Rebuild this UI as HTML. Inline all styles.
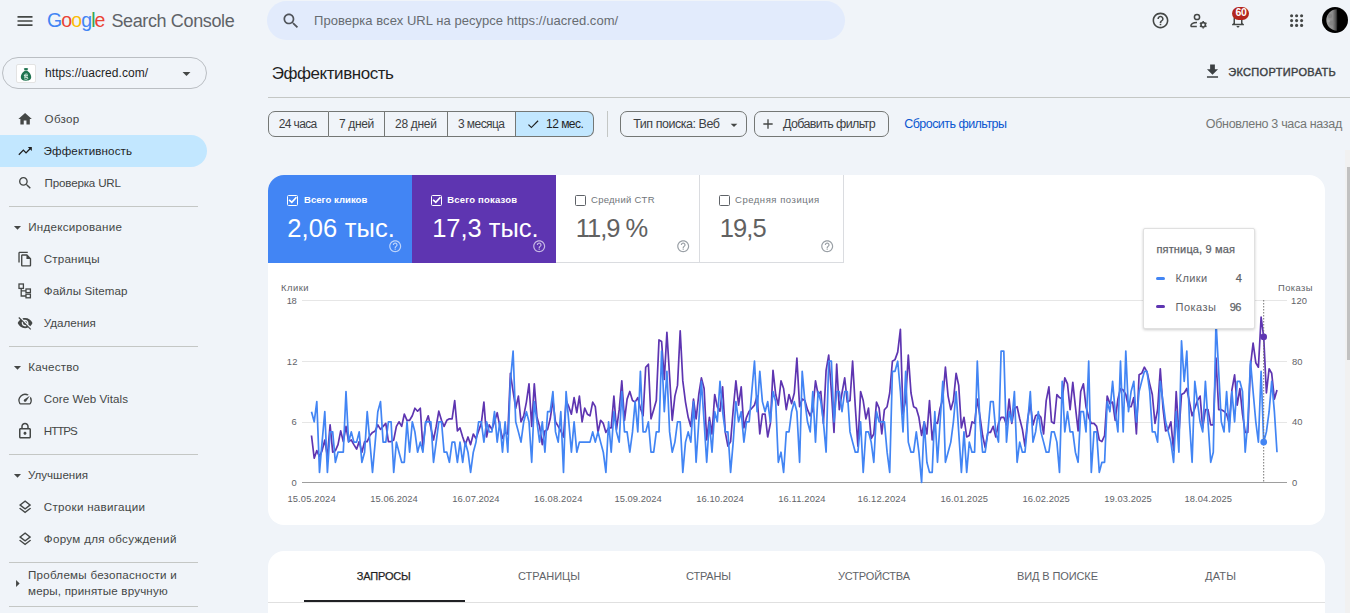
<!DOCTYPE html>
<html lang="ru">
<head>
<meta charset="utf-8">
<title>Эффективность</title>
<style>
*{box-sizing:border-box;margin:0;padding:0}
html,body{width:1350px;height:613px;overflow:hidden}
body{background:#f0f4f9;font-family:"Liberation Sans",sans-serif;color:#1f1f1f;position:relative}
.b{position:absolute}
.t{position:absolute;white-space:nowrap;line-height:1}
svg{position:absolute;overflow:visible}
.hr{position:absolute;left:9px;width:189px;height:1px;background:#c4c7c5}
.seg{position:absolute;top:111px;height:26px;border:1px solid #747775;border-left:none}
.chip{position:absolute;top:111px;height:26px;border:1px solid #747775;border-radius:7px}
.card{position:absolute;background:#fff;border-radius:16px}
.cb{position:absolute;width:11px;height:11px;border-radius:1.5px}
</style>
</head>
<body>
<!-- header -->
<div class="b" style="left:267px;top:1px;width:578px;height:39px;border-radius:20px;background:#e2ebfc"></div>
<!-- property selector -->
<div class="b" style="left:2px;top:57px;width:205px;height:32px;border:1px solid #babec3;border-radius:16px"></div>
<div class="b" style="left:16px;top:64px;width:20px;height:19px;background:#fff;border:1px solid #e3e3e3;border-radius:2px"></div>
<!-- nav -->
<div class="b" style="left:0;top:135px;width:207px;height:32px;background:#c2e7ff;border-radius:0 16px 16px 0"></div>
<div class="hr" style="top:206px"></div>
<div class="hr" style="top:346px"></div>
<div class="hr" style="top:454px"></div>
<div class="hr" style="top:562px"></div>
<div class="hr" style="top:606px"></div>
<!-- main -->
<div class="b" style="left:268px;top:97px;width:1082px;height:1px;background:#c4c7c5"></div>
<div class="seg" style="left:268px;width:61px;border-left:1px solid #747775;border-radius:7px 0 0 7px"></div>
<div class="seg" style="left:329px;width:56px"></div>
<div class="seg" style="left:385px;width:63px"></div>
<div class="seg" style="left:448px;width:68px"></div>
<div class="seg" style="left:516px;width:78px;border-radius:0 7px 7px 0;background:#c2e7ff"></div>
<div class="b" style="left:607px;top:111px;width:1px;height:26px;background:#c4c7c5"></div>
<div class="chip" style="left:620px;width:127px"></div>
<div class="chip" style="left:754px;width:135px"></div>
<!-- card 1 -->
<div class="card" style="left:268px;top:175px;width:1057px;height:349.5px"></div>
<div class="b" style="left:268px;top:175px;width:144px;height:88px;background:#4285f4;border-radius:16px 0 0 0"></div>
<div class="b" style="left:412px;top:175px;width:144px;height:88px;background:#5e35b1"></div>
<div class="b" style="left:556px;top:175px;width:144px;height:88px;border-right:1px solid #dadce0;border-bottom:1px solid #dadce0"></div>
<div class="b" style="left:700px;top:175px;width:144px;height:88px;border-right:1px solid #dadce0;border-bottom:1px solid #dadce0"></div>
<div class="cb" style="left:287px;top:195px;border:1.3px solid #fff"></div>
<div class="cb" style="left:431px;top:195px;border:1.3px solid #fff"></div>
<div class="cb" style="left:575px;top:195px;border:1.3px solid #5f6368"></div>
<div class="cb" style="left:719px;top:195px;border:1.3px solid #5f6368"></div>

<svg style="left:0;top:0" width="1350" height="613" viewBox="0 0 1350 613">
<g stroke="#e6e6e6" stroke-width="1" shape-rendering="crispEdges">
<line x1="302" x2="1287" y1="300.5" y2="300.5"/><line x1="302" x2="1287" y1="361.5" y2="361.5"/><line x1="302" x2="1287" y1="422.5" y2="422.5"/>
</g>
<line x1="302" x2="1287" y1="482.5" y2="482.5" stroke="#9e9e9e" stroke-width="1" shape-rendering="crispEdges"/>
<polyline fill="none" stroke="#5e35b1" stroke-width="1.7" stroke-linejoin="round" points="311.5,435.5 314.2,458.2 316.8,450.6 319.5,456.7 322.1,450.6 324.8,440.0 327.4,456.7 330.1,424.9 332.7,452.2 335.4,450.6 338.0,444.6 340.7,430.9 343.3,441.6 346.0,426.4 348.6,441.6 351.3,440.0 353.9,444.6 356.6,449.1 359.2,441.6 361.9,452.2 364.6,441.6 367.2,441.6 369.9,435.5 372.5,432.4 375.2,430.9 377.8,424.9 380.5,429.4 383.1,426.4 385.8,423.4 388.4,441.6 391.1,441.6 393.7,440.0 396.4,426.4 399.0,421.8 401.7,426.4 404.3,414.2 407.0,420.3 409.6,420.3 412.3,415.8 414.9,408.2 417.6,411.2 420.3,408.2 422.9,447.6 425.6,423.4 428.2,415.8 430.9,427.9 433.5,440.0 436.2,426.4 438.8,411.2 441.5,420.3 444.1,426.4 446.8,420.3 449.4,418.8 452.1,418.8 454.7,400.6 457.4,430.9 460.0,427.9 462.7,437.0 465.3,444.6 468.0,437.0 470.6,444.6 473.3,434.0 476.0,438.5 478.6,430.9 481.3,423.4 483.9,402.1 486.6,437.0 489.2,424.9 491.9,429.4 494.5,421.8 497.2,412.7 499.8,426.4 502.5,438.5 505.1,432.4 507.8,434.0 510.4,373.3 513.1,391.5 515.7,408.2 518.4,396.1 521.0,421.8 523.7,415.8 526.4,402.1 529.0,383.9 531.7,426.4 534.3,383.9 537.0,417.3 539.6,426.4 542.3,444.6 544.9,430.9 547.6,429.4 550.2,418.8 552.9,400.6 555.5,421.8 558.2,426.4 560.8,430.9 563.5,437.0 566.1,400.6 568.8,406.7 571.4,414.2 574.1,397.6 576.8,412.7 579.4,396.1 582.1,421.8 584.7,408.2 587.4,414.2 590.0,415.8 592.7,402.1 595.3,406.7 598.0,432.4 600.6,420.3 603.3,423.4 605.9,432.4 608.6,427.9 611.2,427.9 613.9,396.1 616.5,429.4 619.2,409.7 621.8,380.9 624.5,420.3 627.1,399.1 629.8,391.5 632.5,400.6 635.1,402.1 637.8,397.6 640.4,408.2 643.1,415.8 645.7,367.2 648.4,364.2 651.0,418.8 653.7,409.7 656.3,400.6 659.0,339.9 661.6,341.5 664.3,379.4 666.9,332.4 669.6,376.3 672.2,420.3 674.9,396.1 677.5,385.4 680.2,330.8 682.8,380.9 685.5,402.1 688.2,417.3 690.8,426.4 693.5,399.1 696.1,418.8 698.8,394.5 701.4,377.9 704.1,388.5 706.7,440.0 709.4,417.3 712.0,434.0 714.7,394.5 717.3,406.7 720.0,411.2 722.6,386.9 725.3,432.4 727.9,446.1 730.6,441.6 733.2,409.7 735.9,380.9 738.6,405.1 741.2,386.9 743.9,427.9 746.5,417.3 749.2,411.2 751.8,408.2 754.5,405.1 757.1,396.1 759.8,434.0 762.4,414.2 765.1,414.2 767.7,437.0 770.4,423.4 773.0,370.3 775.7,394.5 778.3,405.1 781.0,380.9 783.6,388.5 786.3,409.7 789.0,394.5 791.6,403.6 794.3,393.0 796.9,358.1 799.6,406.7 802.2,399.1 804.9,400.6 807.5,409.7 810.2,415.8 812.8,409.7 815.5,380.9 818.1,394.5 820.8,391.5 823.4,423.4 826.1,370.3 828.7,355.1 831.4,391.5 834.0,432.4 836.7,364.2 839.3,409.7 842.0,393.0 844.7,377.9 847.3,402.1 850.0,400.6 852.6,361.2 855.3,406.7 857.9,446.1 860.6,391.5 863.2,400.6 865.9,418.8 868.5,408.2 871.2,438.5 873.8,434.0 876.5,402.1 879.1,408.2 881.8,434.0 884.4,409.7 887.1,406.7 889.7,393.0 892.4,361.2 895.0,359.6 897.7,352.1 900.4,329.3 903.0,414.2 905.7,399.1 908.3,355.1 911.0,393.0 913.6,406.7 916.3,408.2 918.9,417.3 921.6,435.5 924.2,421.8 926.9,434.0 929.5,400.6 932.2,440.0 934.8,421.8 937.5,423.4 940.1,408.2 942.8,399.1 945.4,367.2 948.1,396.1 950.8,409.7 953.4,400.6 956.1,373.3 958.7,385.4 961.4,427.9 964.0,417.3 966.7,437.0 969.3,435.5 972.0,421.8 974.6,423.4 977.3,399.1 979.9,415.8 982.6,435.5 985.2,447.6 987.9,432.4 990.5,432.4 993.2,426.4 995.8,437.0 998.5,423.4 1001.1,417.3 1003.8,417.3 1006.5,424.9 1009.1,399.1 1011.8,423.4 1014.4,408.2 1017.1,406.7 1019.7,418.8 1022.4,429.4 1025.0,446.1 1027.7,418.8 1030.3,403.6 1033.0,424.9 1035.6,415.8 1038.3,414.2 1040.9,417.3 1043.6,434.0 1046.2,400.6 1048.9,386.9 1051.5,421.8 1054.2,423.4 1056.9,394.5 1059.5,397.6 1062.2,399.1 1064.8,377.9 1067.5,383.9 1070.1,409.7 1072.8,382.4 1075.4,406.7 1078.1,430.9 1080.7,391.5 1083.4,383.9 1086.0,406.7 1088.7,417.3 1091.3,423.4 1094.0,423.4 1096.6,426.4 1099.3,440.0 1101.9,441.6 1104.6,435.5 1107.2,396.1 1109.9,403.6 1112.6,402.1 1115.2,420.3 1117.9,399.1 1120.5,388.5 1123.2,390.0 1125.8,394.5 1128.5,406.7 1131.1,406.7 1133.8,397.6 1136.4,434.0 1139.1,374.8 1141.7,373.3 1144.4,367.2 1147.0,371.8 1149.7,383.9 1152.3,394.5 1155.0,423.4 1157.6,409.7 1160.3,368.8 1163.0,408.2 1165.6,430.9 1168.3,429.4 1170.9,421.8 1173.6,450.6 1176.2,391.5 1178.9,434.0 1181.5,394.5 1184.2,393.0 1186.8,388.5 1189.5,402.1 1192.1,415.8 1194.8,408.2 1197.4,400.6 1200.1,396.1 1202.7,427.9 1205.4,409.7 1208.0,409.7 1210.7,424.9 1213.3,424.9 1216.0,358.1 1218.7,409.7 1221.3,409.7 1224.0,411.2 1226.6,414.2 1229.3,423.4 1231.9,390.0 1234.6,374.8 1237.2,405.1 1239.9,388.5 1242.5,414.2 1245.2,432.4 1247.8,432.4 1250.5,365.7 1253.1,343.0 1255.8,362.7 1258.4,367.2 1261.1,317.2 1263.7,336.9 1266.4,393.0 1269.1,368.8 1271.7,373.3 1274.4,399.1 1277.0,390.0"/>
<polyline fill="none" stroke="#4285f4" stroke-width="1.7" stroke-linejoin="round" points="311.5,411.7 314.2,421.8 316.8,401.6 319.5,472.4 322.1,442.1 324.8,411.7 327.4,472.4 330.1,431.9 332.7,431.9 335.4,462.3 338.0,452.2 340.7,452.2 343.3,452.2 346.0,391.5 348.6,442.1 351.3,431.9 353.9,442.1 356.6,442.1 359.2,431.9 361.9,462.3 364.6,452.2 367.2,411.7 369.9,442.1 372.5,472.4 375.2,442.1 377.8,411.7 380.5,401.6 383.1,442.1 385.8,442.1 388.4,421.8 391.1,421.8 393.7,472.4 396.4,442.1 399.0,452.2 401.7,462.3 404.3,462.3 407.0,421.8 409.6,452.2 412.3,421.8 414.9,431.9 417.6,452.2 420.3,442.1 422.9,452.2 425.6,421.8 428.2,421.8 430.9,421.8 433.5,462.3 436.2,442.1 438.8,421.8 441.5,421.8 444.1,452.2 446.8,452.2 449.4,462.3 452.1,442.1 454.7,442.1 457.4,462.3 460.0,442.1 462.7,462.3 465.3,442.1 468.0,452.2 470.6,472.4 473.3,452.2 476.0,442.1 478.6,421.8 481.3,421.8 483.9,442.1 486.6,421.8 489.2,431.9 491.9,431.9 494.5,411.7 497.2,442.1 499.8,421.8 502.5,452.2 505.1,421.8 507.8,452.2 510.4,381.4 513.1,351.1 515.7,421.8 518.4,431.9 521.0,442.1 523.7,421.8 526.4,411.7 529.0,421.8 531.7,462.3 534.3,401.6 537.0,421.8 539.6,442.1 542.3,421.8 544.9,452.2 547.6,411.7 550.2,411.7 552.9,391.5 555.5,431.9 558.2,442.1 560.8,411.7 563.5,472.4 566.1,391.5 568.8,421.8 571.4,452.2 574.1,421.8 576.8,452.2 579.4,442.1 582.1,442.1 584.7,442.1 587.4,442.1 590.0,442.1 592.7,431.9 595.3,442.1 598.0,431.9 600.6,442.1 603.3,452.2 605.9,472.4 608.6,421.8 611.2,452.2 613.9,411.7 616.5,431.9 619.2,442.1 621.8,391.5 624.5,431.9 627.1,431.9 629.8,452.2 632.5,431.9 635.1,401.6 637.8,431.9 640.4,371.3 643.1,431.9 645.7,431.9 648.4,421.8 651.0,452.2 653.7,452.2 656.3,431.9 659.0,431.9 661.6,351.1 664.3,411.7 666.9,371.3 669.6,431.9 672.2,452.2 674.9,442.1 677.5,421.8 680.2,421.8 682.8,472.4 685.5,442.1 688.2,431.9 690.8,442.1 693.5,401.6 696.1,462.3 698.8,421.8 701.4,381.4 704.1,421.8 706.7,462.3 709.4,421.8 712.0,452.2 714.7,411.7 717.3,421.8 720.0,381.4 722.6,411.7 725.3,431.9 727.9,431.9 730.6,472.4 733.2,442.1 735.9,401.6 738.6,421.8 741.2,411.7 743.9,442.1 746.5,421.8 749.2,421.8 751.8,391.5 754.5,361.2 757.1,411.7 759.8,371.3 762.4,401.6 765.1,411.7 767.7,401.6 770.4,421.8 773.0,391.5 775.7,401.6 778.3,462.3 781.0,452.2 783.6,472.4 786.3,431.9 789.0,431.9 791.6,411.7 794.3,401.6 796.9,411.7 799.6,462.3 802.2,371.3 804.9,401.6 807.5,421.8 810.2,431.9 812.8,391.5 815.5,442.1 818.1,391.5 820.8,401.6 823.4,421.8 826.1,452.2 828.7,361.2 831.4,361.2 834.0,421.8 836.7,391.5 839.3,391.5 842.0,411.7 844.7,391.5 847.3,391.5 850.0,431.9 852.6,442.1 855.3,452.2 857.9,452.2 860.6,421.8 863.2,472.4 865.9,431.9 868.5,431.9 871.2,442.1 873.8,462.3 876.5,411.7 879.1,421.8 881.8,421.8 884.4,421.8 887.1,452.2 889.7,472.4 892.4,371.3 895.0,371.3 897.7,361.2 900.4,391.5 903.0,431.9 905.7,371.3 908.3,442.1 911.0,452.2 913.6,452.2 916.3,431.9 918.9,452.2 921.6,482.5 924.2,421.8 926.9,462.3 929.5,472.4 932.2,472.4 934.8,411.7 937.5,462.3 940.1,421.8 942.8,381.4 945.4,462.3 948.1,452.2 950.8,442.1 953.4,421.8 956.1,391.5 958.7,431.9 961.4,472.4 964.0,431.9 966.7,472.4 969.3,442.1 972.0,452.2 974.6,452.2 977.3,361.2 979.9,421.8 982.6,452.2 985.2,452.2 987.9,431.9 990.5,401.6 993.2,401.6 995.8,431.9 998.5,442.1 1001.1,351.1 1003.8,351.1 1006.5,442.1 1009.1,411.7 1011.8,421.8 1014.4,391.5 1017.1,462.3 1019.7,442.1 1022.4,452.2 1025.0,452.2 1027.7,421.8 1030.3,391.5 1033.0,442.1 1035.6,431.9 1038.3,411.7 1040.9,431.9 1043.6,442.1 1046.2,452.2 1048.9,452.2 1051.5,431.9 1054.2,431.9 1056.9,442.1 1059.5,472.4 1062.2,381.4 1064.8,431.9 1067.5,411.7 1070.1,431.9 1072.8,431.9 1075.4,452.2 1078.1,462.3 1080.7,411.7 1083.4,411.7 1086.0,431.9 1088.7,361.2 1091.3,472.4 1094.0,431.9 1096.6,431.9 1099.3,472.4 1101.9,462.3 1104.6,462.3 1107.2,401.6 1109.9,411.7 1112.6,381.4 1115.2,411.7 1117.9,431.9 1120.5,361.2 1123.2,431.9 1125.8,351.1 1128.5,411.7 1131.1,391.5 1133.8,381.4 1136.4,421.8 1139.1,391.5 1141.7,381.4 1144.4,371.3 1147.0,371.3 1149.7,391.5 1152.3,431.9 1155.0,431.9 1157.6,442.1 1160.3,381.4 1163.0,401.6 1165.6,421.8 1168.3,431.9 1170.9,442.1 1173.6,462.3 1176.2,411.7 1178.9,452.2 1181.5,340.9 1184.2,381.4 1186.8,351.1 1189.5,421.8 1192.1,462.3 1194.8,381.4 1197.4,401.6 1200.1,421.8 1202.7,431.9 1205.4,381.4 1208.0,421.8 1210.7,462.3 1213.3,452.2 1216.0,320.7 1218.7,371.3 1221.3,421.8 1224.0,431.9 1226.6,391.5 1229.3,431.9 1231.9,391.5 1234.6,421.8 1237.2,381.4 1239.9,381.4 1242.5,391.5 1245.2,452.2 1247.8,421.8 1250.5,361.2 1253.1,391.5 1255.8,421.8 1258.4,442.1 1261.1,371.3 1263.7,442.1 1266.4,431.9 1269.1,411.7 1271.7,381.4 1274.4,411.7 1277.0,452.2"/>
<line x1="1263.7" x2="1263.7" y1="300" y2="483" stroke="#757575" stroke-width="1" stroke-dasharray="1.5,1.5"/>
<circle cx="1263.7" cy="336.9" r="3.3" fill="#5e35b1"/>
<circle cx="1263.7" cy="442.1" r="3.4" fill="#4285f4"/>
</svg>
<!-- tooltip -->
<div class="b" style="left:1143px;top:228px;width:112px;height:101px;background:#fff;border:1px solid #e0e0e0;border-radius:2px;box-shadow:0 1px 3px rgba(0,0,0,.2)"></div>
<div class="b" style="left:1156px;top:276.5px;width:9px;height:3px;border-radius:1.5px;background:#4285f4"></div>
<div class="b" style="left:1156px;top:304.5px;width:9px;height:3px;border-radius:1.5px;background:#5e35b1"></div>
<!-- card 2 -->
<div class="card" style="left:268px;top:551px;width:1057px;height:80px"></div>
<div class="b" style="left:268px;top:602px;width:1057px;height:1px;background:#e0e0e0"></div>
<div class="b" style="left:304px;top:600px;width:161px;height:2px;background:#202124"></div>
<!-- scrollbar -->
<div class="b" style="left:1345px;top:150px;width:5px;height:463px;background:#f1f1f1"></div>
<div class="b" style="left:1347px;top:167px;width:3px;height:193px;background:#c1c1c1"></div>
<!-- icons -->
<svg style="left:14.5px;top:11.0px" width="20" height="20" viewBox="0 0 24 24"><path fill="#444746" d="M3 18h18v-2H3v2zm0-5h18v-2H3v2zm0-7v2h18V6H3z"/></svg>
<svg style="left:281.2px;top:11.3px" width="20" height="20" viewBox="0 0 24 24"><path fill="#50545a" d="M15.5 14h-.79l-.28-.27C15.41 12.59 16 11.11 16 9.5 16 5.91 13.09 3 9.5 3S3 5.91 3 9.5 5.91 16 9.5 16c1.61 0 3.09-.59 4.23-1.57l.27.28v.79l5 4.99L20.49 19l-4.99-5zm-6 0C7.01 14 5 11.99 5 9.5S7.01 5 9.5 5 14 7.01 14 9.5 11.99 14 9.5 14z"/></svg>
<svg style="left:1150.5px;top:11.2px" width="19" height="19" viewBox="0 0 24 24"><path fill="#444746" d="M11 18h2v-2h-2v2zm1-16C6.48 2 2 6.48 2 12s4.48 10 10 10 10-4.48 10-10S17.52 2 12 2zm0 18c-4.41 0-8-3.59-8-8s3.59-8 8-8 8 3.59 8 8-3.59 8-8 8zm0-14c-2.21 0-4 1.79-4 4h2c0-1.1.9-2 2-2s2 .9 2 2c0 2-3 1.75-3 5h2c0-2.25 3-2.5 3-5 0-2.21-1.79-4-4-4z"/></svg>
<svg style="left:1289px;top:13px" width="16" height="16" viewBox="0 0 16 16"><g fill="#444746"><circle cx="2.6" cy="2.8" r="1.55"/><circle cx="2.6" cy="7.6" r="1.55"/><circle cx="2.6" cy="12.399999999999999" r="1.55"/><circle cx="7.6" cy="2.8" r="1.55"/><circle cx="7.6" cy="7.6" r="1.55"/><circle cx="7.6" cy="12.399999999999999" r="1.55"/><circle cx="12.6" cy="2.8" r="1.55"/><circle cx="12.6" cy="7.6" r="1.55"/><circle cx="12.6" cy="12.399999999999999" r="1.55"/></g></svg>
<svg style="left:1228.6px;top:10.8px" width="18" height="18" viewBox="0 0 24 24"><path fill="#444746" d="M12 22c1.1 0 2-.9 2-2h-4c0 1.1.9 2 2 2zm6-6v-5c0-3.07-1.63-5.64-4.5-6.32V4c0-.83-.67-1.5-1.5-1.5s-1.5.67-1.5 1.5v.68C7.64 5.36 6 7.92 6 11v5l-2 2v1h16v-1l-2-2zm-2 1H8v-6c0-2.48 1.51-4.5 4-4.5s4 2.02 4 4.5v6z"/></svg>
<svg style="left:1202.5px;top:62.3px" width="19" height="19" viewBox="0 0 24 24"><path fill="#3c4043" d="M19 9h-4V3H9v6H5l7 7 7-7zM5 18v2h14v-2H5z"/></svg>
<svg style="left:177.3px;top:63.8px" width="19" height="19" viewBox="0 0 24 24"><path fill="#444746" d="M7 10l5 5 5-5z"/></svg>
<svg style="left:1189px;top:12px" width="20" height="18" viewBox="0 0 20 18"><circle cx="8" cy="5" r="2.6" fill="none" stroke="#444746" stroke-width="1.5"/><path d="M1.8 14.5c0-2.6 2.8-4 6.2-4" fill="none" stroke="#444746" stroke-width="1.5"/><path d="M1.8 14.5h6" stroke="#444746" stroke-width="1.5"/><circle cx="14.2" cy="12.8" r="2.2" fill="none" stroke="#444746" stroke-width="1.6"/><path d="M14.2 9v1.4M14.2 15.2v1.4M10.9 10.9l1.2.7M16.3 14l1.2.7M10.9 14.7l1.2-.7M16.3 11.6l1.2-.7" stroke="#444746" stroke-width="1.5"/></svg>
<div class="b" style="left:1232px;top:7px;width:17px;height:13px;border-radius:6.5px;background:#b3261e"></div>
<svg style="left:1322px;top:7.2px" width="26" height="26" viewBox="0 0 26 26"><defs><linearGradient id="mg" x1="0" x2="1" y1="0" y2="0"><stop offset="0" stop-color="#a0a0a0"/><stop offset=".55" stop-color="#8a8a8a"/><stop offset=".85" stop-color="#4a4a4a"/><stop offset="1" stop-color="#000"/></linearGradient></defs><circle cx="13" cy="13" r="13" fill="#000"/><path d="M15 2.300A10.700 10.700 0 0 0 15 23.700c.6-3.400.8-7 .8-10.700S15.600 5.700 15 2.300z" fill="url(#mg)"/><circle cx="8" cy="9" r="2.200" fill="#777" opacity=".5"/><circle cx="10" cy="16" r="2.600" fill="#777" opacity=".45"/><circle cx="6.500" cy="14" r="1.400" fill="#bbb" opacity=".4"/></svg>
<svg style="left:19px;top:66.500px" width="14" height="15" viewBox="0 0 14 15"><path d="M4.800 1.600c.8-.9 3.600-.9 4.400 0l-.9 2h-2.600z" fill="#1f7350"/><path d="M5.500 3.900h3c2.300 1.500 3.700 3.800 3.700 6.200 0 2.500-1.500 3.600-5.200 3.600s-5.200-1.100-5.200-3.600c0-2.400 1.400-4.700 3.700-6.200z" fill="#1f7350"/><path d="M5 8.400h4M5 10.200h4M8.600 7.300c-2-.8-3.400.2-3.200 1.500.2 1.700 3.400 1 3.400 2.500 0 1-1.800 1.400-3.600.6" fill="none" stroke="#dff1e7" stroke-width=".9"/></svg>
<svg style="left:16.9px;top:110.8px" width="16.2" height="16.2" viewBox="0 0 24 24"><path fill="#444746" d="M10 20v-6h4v6h5v-8h3L12 3 2 12h3v8z"/></svg>
<svg style="left:16.9px;top:142.9px" width="16.2" height="16.2" viewBox="0 0 24 24"><path fill="#1f1f1f" d="M16 6l2.29 2.29-4.88 4.88-4-4L2 16.59 3.41 18l6-6 4 4 6.3-6.29L22 12V6z"/></svg>
<svg style="left:17.2px;top:174.7px" width="16.2" height="16.2" viewBox="0 0 24 24"><path fill="#444746" d="M15.5 14h-.79l-.28-.27C15.41 12.59 16 11.11 16 9.5 16 5.91 13.09 3 9.5 3S3 5.91 3 9.5 5.91 16 9.5 16c1.61 0 3.09-.59 4.23-1.57l.27.28v.79l5 4.99L20.49 19l-4.99-5zm-6 0C7.01 14 5 11.99 5 9.5S7.01 5 9.5 5 14 7.01 14 9.5 11.99 14 9.5 14z"/></svg>
<svg style="left:16.9px;top:250.9px" width="16.2" height="16.2" viewBox="0 0 24 24"><path fill="#444746" d="M16 1H4c-1.1 0-2 .9-2 2v14h2V3h12V1zm-1 4H8c-1.1 0-1.99.9-1.99 2L6 21c0 1.1.89 2 1.99 2H19c1.1 0 2-.9 2-2V11l-6-6zM8 21V7h6v5h5v9H8z"/></svg>
<svg style="left:18px;top:283px" width="14" height="16" viewBox="0 0 14 16"><g fill="none" stroke="#444746" stroke-width="1.3"><rect x="1" y="1" width="4.400" height="4.400"/><rect x="8" y="6" width="4.400" height="3.600"/><rect x="8" y="11.200" width="4.400" height="3.600"/><path d="M3.200 5.400v7.600h4.800M3.200 7.800h4.800"/></g></svg>
<svg style="left:16.9px;top:314.9px" width="16.2" height="16.2" viewBox="0 0 24 24"><path fill="#444746" d="M12 7c2.76 0 5 2.24 5 5 0 .65-.13 1.26-.36 1.83l2.92 2.92c1.51-1.26 2.7-2.89 3.43-4.75-1.73-4.39-6-7.5-11-7.5-1.4 0-2.74.25-3.98.7l2.16 2.16C10.74 7.13 11.35 7 12 7zM2 4.27l2.28 2.28.46.46C3.08 8.3 1.78 10.02 1 12c1.73 4.39 6 7.5 11 7.5 1.55 0 3.03-.3 4.38-.84l.42.42L19.73 22 21 20.73 3.27 3 2 4.27zM7.53 9.8l1.55 1.55c-.05.21-.08.43-.08.65 0 1.66 1.34 3 3 3 .22 0 .44-.03.65-.08l1.55 1.55c-.67.33-1.41.53-2.2.53-2.76 0-5-2.24-5-5 0-.79.2-1.53.53-2.2zm4.31-.78l3.15 3.15.02-.16c0-1.66-1.34-3-3-3l-.17.01z"/></svg>
<svg style="left:16.8px;top:390.7px" width="16.2" height="16.2" viewBox="0 0 24 24"><path fill="#444746" d="M20.38 8.57l-1.23 1.85a8 8 0 0 1-.22 7.58H5.07A8 8 0 0 1 15.58 6.85l1.85-1.23A10 10 0 0 0 3.35 19a2 2 0 0 0 1.72 1h13.85a2 2 0 0 0 1.74-1 10 10 0 0 0-.27-10.44zm-9.79 6.84a2 2 0 0 0 2.83 0l5.66-8.49-8.49 5.66a2 2 0 0 0 0 2.83z"/></svg>
<svg style="left:15.9px;top:422.4px" width="18" height="18" viewBox="0 0 24 24"><path fill="#444746" d="M18 8h-1V6c0-2.76-2.24-5-5-5S7 3.24 7 6v2H6c-1.1 0-2 .9-2 2v10c0 1.1.9 2 2 2h12c1.1 0 2-.9 2-2V10c0-1.1-.9-2-2-2zM9 6c0-1.66 1.34-3 3-3s3 1.34 3 3v2H9V6zm9 14H6V10h12v10zm-6-3c1.1 0 2-.9 2-2s-.9-2-2-2-2 .9-2 2 .9 2 2 2z"/></svg>
<svg style="left:16.9px;top:498.9px" width="16.2" height="16.2" viewBox="0 0 24 24"><path fill="#444746" d="M11.99 18.54l-7.37-5.73L3 14.07l9 7 9-7-1.63-1.27-7.38 5.74zM12 16l7.36-5.73L21 9l-9-7-9 7 1.63 1.27L12 16zm0-11.47L17.74 9 12 13.47 6.26 9 12 4.53z"/></svg>
<svg style="left:16.9px;top:530.9px" width="16.2" height="16.2" viewBox="0 0 24 24"><path fill="#444746" d="M11.99 18.54l-7.37-5.73L3 14.07l9 7 9-7-1.63-1.27-7.38 5.74zM12 16l7.36-5.73L21 9l-9-7-9 7 1.63 1.27L12 16zm0-11.47L17.74 9 12 13.47 6.26 9 12 4.53z"/></svg>
<svg style="left:8.5px;top:218.8px" width="17" height="17" viewBox="0 0 24 24"><path fill="#444746" d="M7 10l5 5 5-5z"/></svg>
<svg style="left:8.5px;top:358.8px" width="17" height="17" viewBox="0 0 24 24"><path fill="#444746" d="M7 10l5 5 5-5z"/></svg>
<svg style="left:8.5px;top:466.8px" width="17" height="17" viewBox="0 0 24 24"><path fill="#444746" d="M7 10l5 5 5-5z"/></svg>
<svg style="left:8.5px;top:574.8px" width="17" height="17" viewBox="0 0 24 24"><path fill="#444746" d="M10 17l5-5-5-5z"/></svg>
<svg style="left:525.6px;top:117.2px" width="14.3" height="14.3" viewBox="0 0 24 24"><path fill="#1f1f1f" d="M9 16.17L4.83 12l-1.42 1.41L9 19 21 7l-1.41-1.41z"/></svg>
<svg style="left:725.8px;top:116.5px" width="16" height="16" viewBox="0 0 24 24"><path fill="#444746" d="M7 10l5 5 5-5z"/></svg>
<svg style="left:760.0px;top:115.7px" width="16" height="16" viewBox="0 0 24 24"><path fill="#444746" d="M19 13h-6v6h-2v-6H5v-2h6V5h2v6h6v2z"/></svg>
<svg style="left:287px;top:195px" width="11" height="11" viewBox="0 0 11 11"><path d="M2.1 4.900l2.700 2.400L9.400 2.200" stroke="#fff" stroke-width="1.700" fill="none"/></svg>
<svg style="left:431px;top:195px" width="11" height="11" viewBox="0 0 11 11"><path d="M2.1 4.900l2.700 2.400L9.400 2.200" stroke="#fff" stroke-width="1.700" fill="none"/></svg>
<svg style="left:387.8px;top:239.2px" width="14.4" height="14.4" viewBox="0 0 24 24"><path fill="rgba(255,255,255,.65)" d="M11 18h2v-2h-2v2zm1-16C6.48 2 2 6.48 2 12s4.48 10 10 10 10-4.48 10-10S17.52 2 12 2zm0 18c-4.41 0-8-3.59-8-8s3.59-8 8-8 8 3.59 8 8-3.59 8-8 8zm0-14c-2.21 0-4 1.79-4 4h2c0-1.1.9-2 2-2s2 .9 2 2c0 2-3 1.75-3 5h2c0-2.25 3-2.5 3-5 0-2.21-1.79-4-4-4z"/></svg>
<svg style="left:531.8px;top:239.2px" width="14.4" height="14.4" viewBox="0 0 24 24"><path fill="rgba(255,255,255,.65)" d="M11 18h2v-2h-2v2zm1-16C6.48 2 2 6.48 2 12s4.48 10 10 10 10-4.48 10-10S17.52 2 12 2zm0 18c-4.41 0-8-3.59-8-8s3.59-8 8-8 8 3.59 8 8-3.59 8-8 8zm0-14c-2.21 0-4 1.79-4 4h2c0-1.1.9-2 2-2s2 .9 2 2c0 2-3 1.75-3 5h2c0-2.25 3-2.5 3-5 0-2.21-1.79-4-4-4z"/></svg>
<svg style="left:675.8px;top:239.2px" width="14.4" height="14.4" viewBox="0 0 24 24"><path fill="#9aa0a6" d="M11 18h2v-2h-2v2zm1-16C6.48 2 2 6.48 2 12s4.48 10 10 10 10-4.48 10-10S17.52 2 12 2zm0 18c-4.41 0-8-3.59-8-8s3.59-8 8-8 8 3.59 8 8-3.59 8-8 8zm0-14c-2.21 0-4 1.79-4 4h2c0-1.1.9-2 2-2s2 .9 2 2c0 2-3 1.75-3 5h2c0-2.25 3-2.5 3-5 0-2.21-1.79-4-4-4z"/></svg>
<svg style="left:819.8px;top:239.2px" width="14.4" height="14.4" viewBox="0 0 24 24"><path fill="#9aa0a6" d="M11 18h2v-2h-2v2zm1-16C6.48 2 2 6.48 2 12s4.48 10 10 10 10-4.48 10-10S17.52 2 12 2zm0 18c-4.41 0-8-3.59-8-8s3.59-8 8-8 8 3.59 8 8-3.59 8-8 8zm0-14c-2.21 0-4 1.79-4 4h2c0-1.1.9-2 2-2s2 .9 2 2c0 2-3 1.75-3 5h2c0-2.25 3-2.5 3-5 0-2.21-1.79-4-4-4z"/></svg>

<!-- TEXT -->
<div class="t" style="left:47.0px;top:11.01px;font-size:19.5px;letter-spacing:-0.907px;color:#4285f4"><span style="color:#4285f4">G</span><span style="color:#ea4335">o</span><span style="color:#fbbc04">o</span><span style="color:#4285f4">g</span><span style="color:#34a853">l</span><span style="color:#ea4335">e</span></div>
<div class="t" style="left:111.4px;top:12.00px;font-size:18px;letter-spacing:-0.366px;color:#5f6368">Search Console</div>
<div class="t" style="left:314.0px;top:14.01px;font-size:13px;letter-spacing:0.052px;color:#676c71">Проверка всех URL на ресурсе https://uacred.com/</div>
<div class="t" style="left:45.0px;top:67.01px;font-size:12px;letter-spacing:0.062px;color:#1f1f1f">https://uacred.com/</div>
<div class="t" style="left:44.6px;top:113.00px;font-size:11.6px;letter-spacing:0.282px;color:#444746">Обзор</div>
<div class="t" style="left:43.6px;top:145.00px;font-size:11.6px;letter-spacing:0.122px;color:#1f1f1f">Эффективность</div>
<div class="t" style="left:44.6px;top:177.00px;font-size:11.6px;letter-spacing:-0.175px;color:#444746">Проверка URL</div>
<div class="t" style="left:28.2px;top:221.00px;font-size:11.6px;letter-spacing:0.282px;color:#444746">Индексирование</div>
<div class="t" style="left:43.8px;top:253.00px;font-size:11.6px;letter-spacing:0.186px;color:#444746">Страницы</div>
<div class="t" style="left:43.8px;top:285.00px;font-size:11.6px;letter-spacing:0.096px;color:#444746">Файлы Sitemap</div>
<div class="t" style="left:43.8px;top:317.00px;font-size:11.6px;letter-spacing:-0.007px;color:#444746">Удаления</div>
<div class="t" style="left:28.2px;top:361.00px;font-size:11.6px;letter-spacing:0.251px;color:#444746">Качество</div>
<div class="t" style="left:43.8px;top:393.00px;font-size:11.6px;letter-spacing:0.058px;color:#444746">Core Web Vitals</div>
<div class="t" style="left:43.8px;top:425.00px;font-size:11.6px;letter-spacing:-1.004px;color:#444746">HTTPS</div>
<div class="t" style="left:28.0px;top:469.00px;font-size:11.6px;letter-spacing:-0.020px;color:#444746">Улучшения</div>
<div class="t" style="left:43.8px;top:501.00px;font-size:11.6px;letter-spacing:0.287px;color:#444746">Строки навигации</div>
<div class="t" style="left:43.8px;top:533.00px;font-size:11.6px;letter-spacing:0.321px;color:#444746">Форум для обсуждений</div>
<div class="t" style="left:28.0px;top:569.00px;font-size:11.6px;letter-spacing:0.255px;color:#444746">Проблемы безопасности и</div>
<div class="t" style="left:28.0px;top:585.00px;font-size:11.6px;letter-spacing:0.168px;color:#444746">меры, принятые вручную</div>
<div class="t" style="left:271.8px;top:65.00px;font-size:17px;letter-spacing:-0.456px;color:#1f1f1f">Эффективность</div>
<div class="t" style="left:1228.2px;top:67.00px;font-size:11px;letter-spacing:0.344px;-webkit-text-stroke:.4px #3c4043;color:#3c4043">ЭКСПОРТИРОВАТЬ</div>
<div class="t" style="left:278.8px;top:118.00px;font-size:12px;letter-spacing:-0.644px;color:#3c4043">24 часа</div>
<div class="t" style="left:339.0px;top:118.00px;font-size:12px;letter-spacing:-0.361px;color:#3c4043">7 дней</div>
<div class="t" style="left:395.0px;top:118.00px;font-size:12px;letter-spacing:-0.290px;color:#3c4043">28 дней</div>
<div class="t" style="left:458.0px;top:118.00px;font-size:12px;letter-spacing:-0.569px;color:#3c4043">3 месяца</div>
<div class="t" style="left:546.0px;top:118.00px;font-size:12px;letter-spacing:-0.517px;color:#1f1f1f">12 мес.</div>
<div class="t" style="left:633.2px;top:118.00px;font-size:12.5px;letter-spacing:-0.459px;color:#3c4043">Тип поиска: Веб</div>
<div class="t" style="left:783.0px;top:118.00px;font-size:12.5px;letter-spacing:-0.630px;color:#3c4043">Добавить фильтр</div>
<div class="t" style="left:904.2px;top:118.00px;font-size:12.5px;letter-spacing:-0.534px;color:#0b57d0">Сбросить фильтры</div>
<div class="t" style="left:1205.8px;top:118.00px;font-size:12.5px;letter-spacing:-0.310px;color:#747775">Обновлено 3 часа назад</div>
<div class="t" style="left:304.0px;top:195.01px;font-size:9.5px;letter-spacing:0.052px;font-weight:bold;color:#fff">Всего кликов</div>
<div class="t" style="left:287.2px;top:216.00px;font-size:25.5px;letter-spacing:0.148px;color:#fff">2,06 тыс.</div>
<div class="t" style="left:447.2px;top:195.01px;font-size:9.5px;letter-spacing:0.188px;font-weight:bold;color:#fff">Всего показов</div>
<div class="t" style="left:432.2px;top:216.00px;font-size:25.5px;letter-spacing:-0.009px;color:#fff">17,3 тыс.</div>
<div class="t" style="left:591.0px;top:195.01px;font-size:9.5px;letter-spacing:0.278px;color:#70757a">Средний CTR</div>
<div class="t" style="left:575.8px;top:216.00px;font-size:25.5px;letter-spacing:-1.046px;color:#616161">11,9 %</div>
<div class="t" style="left:735.0px;top:195.01px;font-size:9.5px;letter-spacing:0.528px;color:#70757a">Средняя позиция</div>
<div class="t" style="left:719.8px;top:216.00px;font-size:25.5px;letter-spacing:-0.914px;color:#616161">19,5</div>
<div class="t" style="left:281.0px;top:283.01px;font-size:9.4px;letter-spacing:0.516px;color:#5f6368">Клики</div>
<div class="t" style="left:1278.0px;top:283.01px;font-size:9.4px;letter-spacing:0.403px;color:#5f6368">Показы</div>
<div class="t" style="left:286.8px;top:296.01px;font-size:9.4px;letter-spacing:-0.388px;color:#5f6368">18</div>
<div class="t" style="left:286.8px;top:357.01px;font-size:9.4px;letter-spacing:0.143px;color:#5f6368">12</div>
<div class="t" style="left:291.6px;top:417.01px;font-size:9.4px;letter-spacing:0.000px;color:#5f6368">6</div>
<div class="t" style="left:291.6px;top:478.01px;font-size:9.4px;letter-spacing:0.000px;color:#5f6368">0</div>
<div class="t" style="left:1291.0px;top:296.01px;font-size:9.4px;letter-spacing:0.172px;color:#5f6368">120</div>
<div class="t" style="left:1292.0px;top:357.01px;font-size:9.4px;letter-spacing:0.143px;color:#5f6368">80</div>
<div class="t" style="left:1292.0px;top:417.01px;font-size:9.4px;letter-spacing:0.143px;color:#5f6368">40</div>
<div class="t" style="left:1292.0px;top:478.01px;font-size:9.4px;letter-spacing:0.000px;color:#5f6368">0</div>
<div class="t" style="left:287.4px;top:494.01px;font-size:9.4px;letter-spacing:0.150px;color:#5f6368">15.05.2024</div>
<div class="t" style="left:370.3px;top:494.01px;font-size:9.4px;letter-spacing:0.050px;color:#5f6368">15.06.2024</div>
<div class="t" style="left:452.2px;top:494.01px;font-size:9.4px;letter-spacing:0.050px;color:#5f6368">16.07.2024</div>
<div class="t" style="left:534.1px;top:494.01px;font-size:9.4px;letter-spacing:0.150px;color:#5f6368">16.08.2024</div>
<div class="t" style="left:614.4px;top:494.01px;font-size:9.4px;letter-spacing:0.050px;color:#5f6368">15.09.2024</div>
<div class="t" style="left:696.3px;top:494.01px;font-size:9.4px;letter-spacing:0.050px;color:#5f6368">16.10.2024</div>
<div class="t" style="left:778.2px;top:494.01px;font-size:9.4px;letter-spacing:0.126px;color:#5f6368">16.11.2024</div>
<div class="t" style="left:857.6px;top:494.01px;font-size:9.4px;letter-spacing:0.150px;color:#5f6368">16.12.2024</div>
<div class="t" style="left:940.5px;top:494.01px;font-size:9.4px;letter-spacing:0.050px;color:#5f6368">16.01.2025</div>
<div class="t" style="left:1022.4px;top:494.01px;font-size:9.4px;letter-spacing:0.050px;color:#5f6368">16.02.2025</div>
<div class="t" style="left:1104.3px;top:494.01px;font-size:9.4px;letter-spacing:0.050px;color:#5f6368">19.03.2025</div>
<div class="t" style="left:1184.6px;top:494.01px;font-size:9.4px;letter-spacing:0.050px;color:#5f6368">18.04.2025</div>
<div class="t" style="left:1156.4px;top:244.00px;font-size:11px;letter-spacing:0.163px;-webkit-text-stroke:.25px #5f6368;color:#5f6368">пятница, 9 мая</div>
<div class="t" style="left:1175.6px;top:273.00px;font-size:11px;letter-spacing:0.423px;color:#5f6368">Клики</div>
<div class="t" style="left:1235.8px;top:273.00px;font-size:11px;letter-spacing:0.000px;-webkit-text-stroke:.25px #5f6368;color:#5f6368">4</div>
<div class="t" style="left:1175.6px;top:302.00px;font-size:11px;letter-spacing:0.468px;color:#5f6368">Показы</div>
<div class="t" style="left:1229.8px;top:302.00px;font-size:11px;letter-spacing:-0.780px;-webkit-text-stroke:.25px #5f6368;color:#5f6368">96</div>
<div class="t" style="left:356.8px;top:571.00px;font-size:11px;letter-spacing:-0.185px;-webkit-text-stroke:.25px #1f1f1f;color:#1f1f1f">ЗАПРОСЫ</div>
<div class="t" style="left:518.0px;top:571.00px;font-size:11px;letter-spacing:-0.003px;color:#5f6368">СТРАНИЦЫ</div>
<div class="t" style="left:686.0px;top:571.00px;font-size:11px;letter-spacing:-0.194px;color:#5f6368">СТРАНЫ</div>
<div class="t" style="left:838.0px;top:571.00px;font-size:11px;letter-spacing:-0.161px;color:#5f6368">УСТРОЙСТВА</div>
<div class="t" style="left:1017.0px;top:571.00px;font-size:11px;letter-spacing:-0.109px;color:#5f6368">ВИД В ПОИСКЕ</div>
<div class="t" style="left:1205.0px;top:571.00px;font-size:11px;letter-spacing:0.203px;color:#5f6368">ДАТЫ</div>
<div class="t" style="left:1235.4px;top:7.01px;font-size:10.5px;letter-spacing:-0.107px;font-weight:bold;color:#fff">60</div>
</body>
</html>
